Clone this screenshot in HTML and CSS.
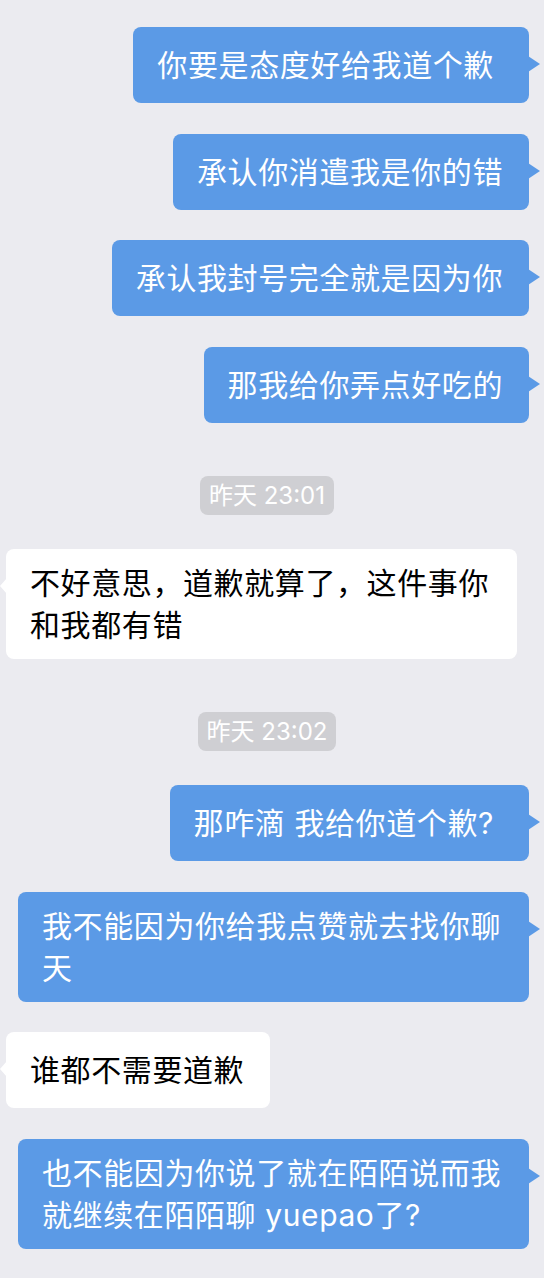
FILE: index.html
```html
<!DOCTYPE html>
<html lang="zh-CN">
<head>
<meta charset="utf-8">
<title>聊天</title>
<link rel="stylesheet" href="styles.css">
</head>
<body>
<main class="chat">
  <div class="row out first"><div class="bubble out"><span>你要是态度好给我道个歉&nbsp;</span></div></div>
  <div class="row out"><div class="bubble out"><span>承认你消遣我是你的错</span></div></div>
  <div class="row out"><div class="bubble out"><span>承认我封号完全就是因为你</span></div></div>
  <div class="row out"><div class="bubble out"><span>那我给你弄点好吃的</span></div></div>
  <div class="stamp-row"><span class="stamp">昨天 23:01</span></div>
  <div class="row in after-stamp"><div class="bubble in"><span>不好意思，道歉就算了，这件事你和我都有错</span></div></div>
  <div class="stamp-row"><span class="stamp">昨天 23:02</span></div>
  <div class="row out after-stamp"><div class="bubble out"><span>那咋滴 我给你道个歉?&nbsp;</span></div></div>
  <div class="row out"><div class="bubble out"><span>我不能因为你给我点赞就去找你聊天</span></div></div>
  <div class="row in"><div class="bubble in"><span>谁都不需要道歉</span></div></div>
  <div class="row out"><div class="bubble out"><span>也不能因为你说了就在陌陌说而我就继续在陌陌聊 yuepao了?</span></div></div>
</main>
</body>
</html>
```

FILE: styles.css
```css
html, body {
  margin: 0;
  padding: 0;
  background: #ebebf0;
}

body {
  width: 544px;
  height: 1278px;
  overflow: hidden;
  font-family: "Inter", "Noto Sans CJK SC", sans-serif;
}

.chat {
  display: flex;
  flex-direction: column;
  padding-top: 27px;
}

.row {
  display: flex;
  margin-top: 30.7px;
}

.row.first {
  margin-top: 0;
}

.row.after-stamp {
  margin-top: 34px;
}

.row.out {
  justify-content: flex-end;
  padding-right: 15px;
}

.row.in {
  justify-content: flex-start;
  padding-left: 6px;
}

.bubble {
  position: relative;
  box-sizing: border-box;
  max-width: 511px;
  min-height: 76px;
  padding: 13px 26px 13px 24px;
  border-radius: 8px;
  display: flex;
  align-items: center;
  font-size: 30px;
  letter-spacing: 0.6px;
  line-height: 42px;
}

.bubble.out {
  background: #5b9ae6;
  color: #ffffff;
}

.bubble.in {
  background: #ffffff;
  color: #000000;
}

.bubble::after {
  content: "";
  position: absolute;
  top: 29px;
  width: 0;
  height: 0;
  border-top: 8px solid transparent;
  border-bottom: 8px solid transparent;
}

.bubble.out::after {
  right: -11px;
  border-left: 12px solid #5b9ae6;
}

.bubble.in::after {
  left: -6px;
  border-right: 7px solid #ffffff;
}

.stamp-row {
  display: flex;
  justify-content: center;
  margin-top: 53px;
  padding-right: 10px;
}

.stamp {
  box-sizing: border-box;
  height: 39px;
  padding: 0 9px;
  border-radius: 8px;
  background: #cfcfd3;
  color: #ffffff;
  font-size: 24px;
  line-height: 39px;
}
```
